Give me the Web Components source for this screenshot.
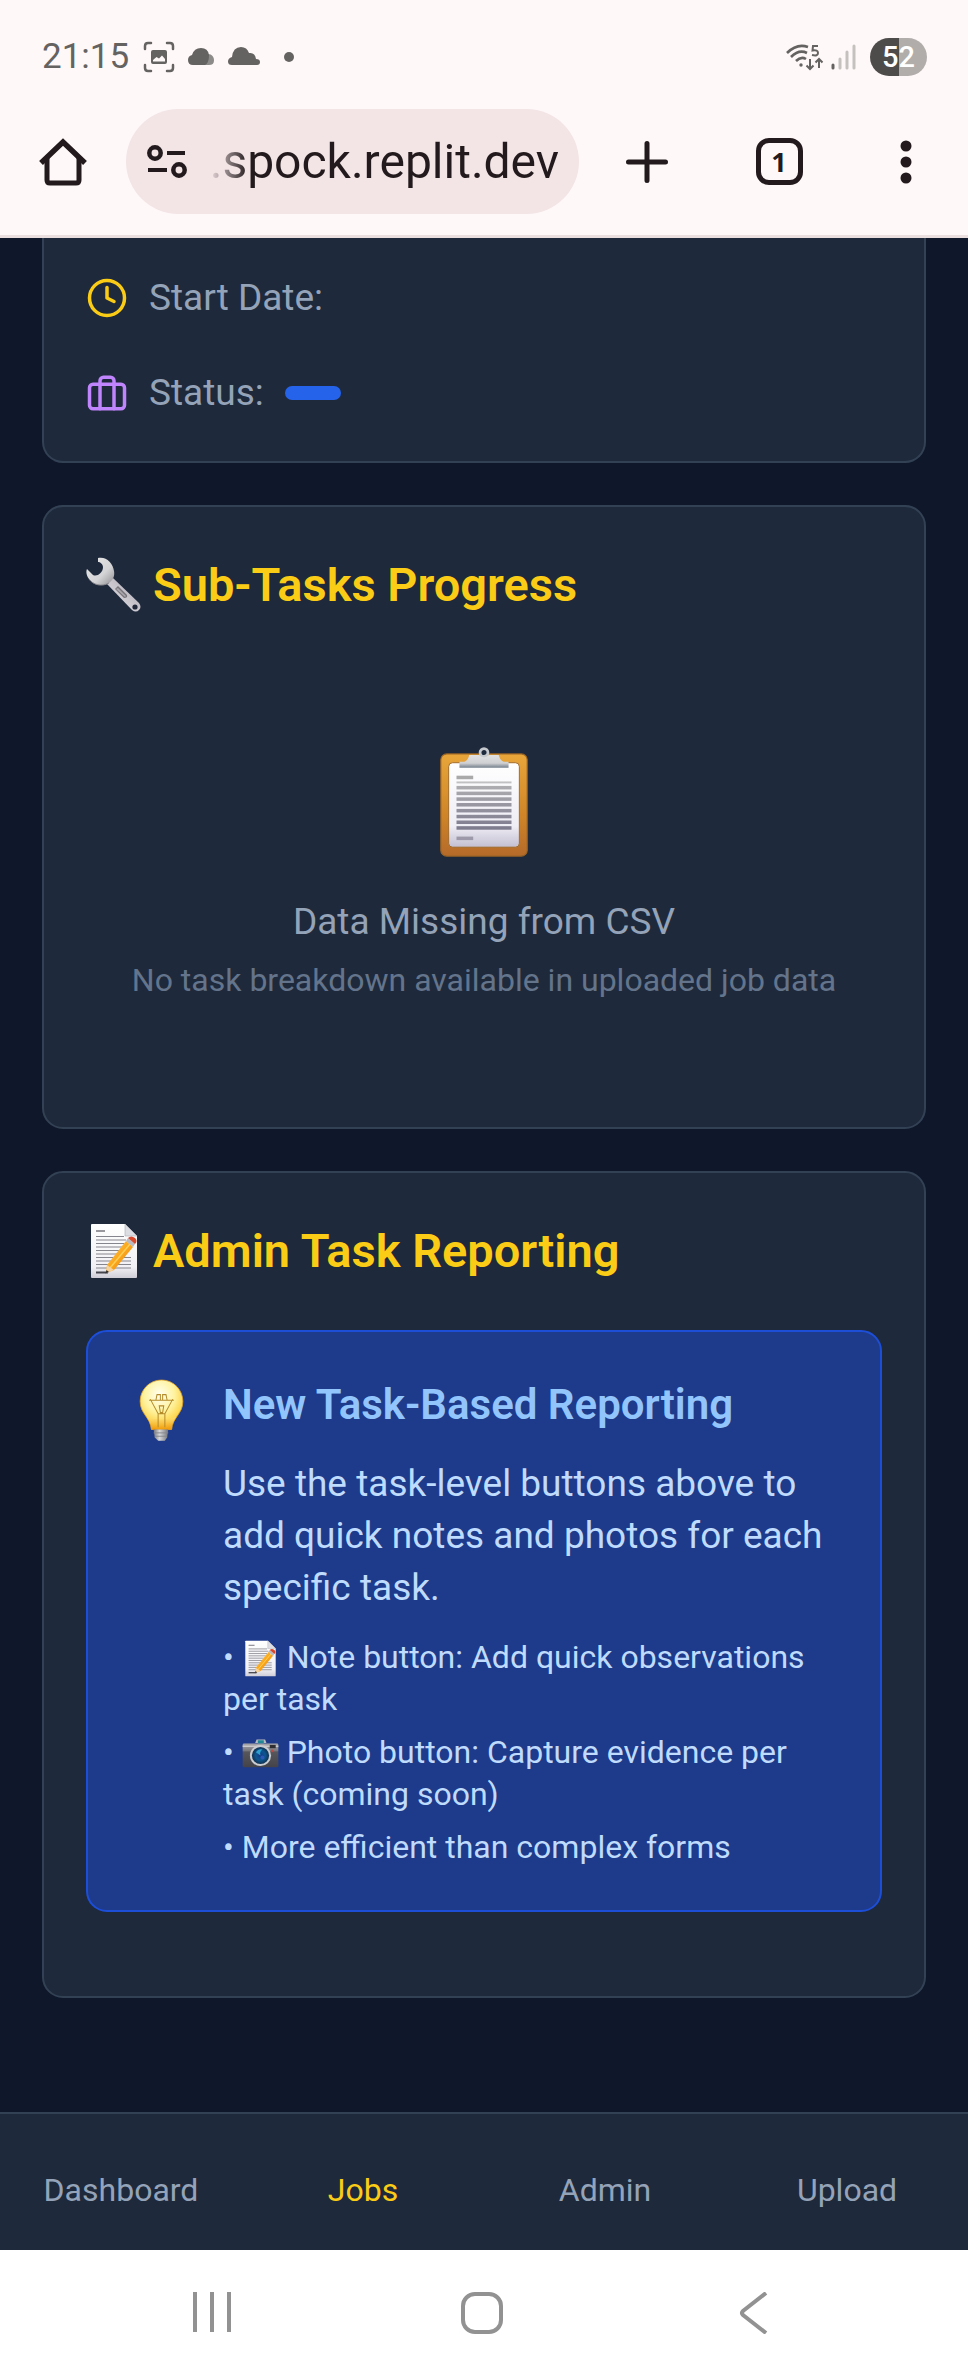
<!DOCTYPE html>
<html lang="en">
<head>
<meta charset="utf-8">
<meta name="viewport" content="width=device-width, initial-scale=1">
<title>Job details</title>
<style>
  body { margin: 0; background: #0f172a; font-family: Roboto, "Liberation Sans", sans-serif; }
</style>
</head>
<body>
<job-screen></job-screen>

<script>
const define = (name, html) => {
  const template = document.createElement('template');
  template.innerHTML = html;
  customElements.define(name, class extends HTMLElement {
    constructor() {
      super();
      this.attachShadow({ mode: 'open' }).append(template.content.cloneNode(true));
    }
  });
};

/* Pictures used in headings and in the text, all on a 56-unit square. */
const PICTURES = {
  wrench: `<defs>
      <linearGradient id="h" x1="0" y1="0" x2="1" y2="1"><stop offset="0" stop-color="#e9e9ea"/><stop offset=".6" stop-color="#d4d4d6"/><stop offset="1" stop-color="#8f8c91"/></linearGradient>
      <linearGradient id="s" x1="0" y1="1" x2="1" y2="0"><stop offset="0" stop-color="#77747b"/><stop offset=".4" stop-color="#cfccd3"/><stop offset="1" stop-color="#a7a2ad"/></linearGradient>
    </defs>
    <path d="M21 27 L27 21 L53 46 Q56 50 53 53 Q50 56 46 53 Z" fill="url(#s)"/>
    <path d="M29 32 L32 29 L41 38 Q42 41 38 41 Z" fill="#77737b"/>
    <path d="M30 32 L32 31 L40 39 L39 40 Z" fill="#aaa6ae"/>
    <circle cx="49" cy="50" r="2.6" fill="#20283a"/>
    <path d="M12 1 C20 -1 27 6 28 14 C29 19 27 23 23 26 C16 30 7 28 3 22 C0 18 0 14 1 12 L7 18 C11 20 17 16 17 10 C17 7 14 5 12 5 Z" fill="url(#h)"/>
    <path d="M23 26 C16 30 7 28 3 22" fill="none" stroke="#8a888e" stroke-width="1"/>`,
  memo: `<defs>
      <linearGradient id="p" x1="0" y1="0" x2="0" y2="1"><stop offset="0" stop-color="#ffffff"/><stop offset=".8" stop-color="#f1f0f5"/><stop offset="1" stop-color="#cfced8"/></linearGradient>
      <linearGradient id="g" x1="0" y1="0" x2="1" y2="1"><stop offset="0" stop-color="#ffce4a"/><stop offset=".5" stop-color="#fba61c"/><stop offset="1" stop-color="#d9780c"/></linearGradient>
    </defs>
    <path d="M6 1 H39 L51 13 V54 Q51 55 50 55 H6 Q5 55 5 54 V2 Q5 1 6 1 Z" fill="url(#p)"/>
    <path d="M39 1 L51 13 H39 Z" fill="#dcdde3" stroke="#a9abb3" stroke-width=".6"/>
    <path d="M10 8 H19" stroke="#77777e" stroke-width="1.5"/>
    <path d="M10 13.500 H38 M10 17 H40 M10 20.500 H38 M10 24 H36 M10 27.500 H33 M10 31 H31 M10 34.500 H45 M10 38 H45 M10 41.500 H45 M10 45 H45" stroke="#85858d" stroke-width="1.2"/>
    <path d="M10 49.500 H22" stroke="#45454d" stroke-width="2"/>
    <path d="M40 18 L47 24 L28 47 L20 50 L21 42 Z" fill="url(#g)"/>
    <path d="M44 21 L24 45" stroke="#ffcf55" stroke-width="1.500"/>
    <path d="M21 42 L28 47 L20 50 Z" fill="#f5d3a0"/><path d="M20.500 47 L23 49 L19.500 50.500 Z" fill="#333"/>
    <path d="M40 18 L42 15 L49 21 L47 24 Z" fill="#b9b9c0"/>
    <path d="M42 15 Q45 12 49 15 Q52 18 49 21 Z" fill="#d9492b"/>`,
  camera: `<defs>
      <linearGradient id="b" x1="0" y1="0" x2="0" y2="1"><stop offset="0" stop-color="#a9a9ad"/><stop offset=".3" stop-color="#77777c"/><stop offset=".35" stop-color="#56565b"/><stop offset="1" stop-color="#434349"/></linearGradient>
      <radialGradient id="l"><stop offset="0" stop-color="#143a86"/><stop offset=".55" stop-color="#0d5791"/><stop offset="1" stop-color="#123150"/></radialGradient>
    </defs>
    <g transform="translate(0 4)">
    <path d="M20 8 L22 3 H35 L37 8 Z" fill="#b8bcc0"/><rect x="24" y="4" width="9" height="5" fill="#1f8796"/>
    <rect x="1" y="9" width="54" height="36" rx="2" fill="url(#b)"/>
    <path d="M1 13 H55" stroke="#c9c9cc" stroke-width="2"/>
    <rect x="42" y="11" width="9" height="5" fill="#2e2e33"/><circle cx="46" cy="20" r="2" fill="#b74b4b"/>
    <circle cx="28" cy="27" r="16" fill="#c9ccd1"/><circle cx="28" cy="27" r="13" fill="url(#l)"/>
    <path d="M21 22 Q25 16 31 18 Q26 22 28 27 Z" fill="#2f9fce"/><circle cx="31" cy="30" r="3" fill="#2e58b8"/>
    </g>`,
  bulb: `<defs>
      <radialGradient id="y" cx=".45" cy=".3" r=".7"><stop offset="0" stop-color="#fffef0"/><stop offset=".5" stop-color="#fff3a0"/><stop offset=".85" stop-color="#fcd348"/><stop offset="1" stop-color="#e9a01c"/></radialGradient>
      <linearGradient id="n" x1="0" y1="0" x2="0" y2="1"><stop offset="0" stop-color="#fce27a"/><stop offset="1" stop-color="#f39a06"/></linearGradient>
      <linearGradient id="m"><stop offset="0" stop-color="#75777d"/><stop offset=".4" stop-color="#d5d7da"/><stop offset="1" stop-color="#74767c"/></linearGradient>
    </defs>
    <path d="M28 0 C39 0 47 9 47 19 C47 30 38 33 37 44 H19 C18 33 9 30 9 19 C9 9 17 0 28 0 Z" fill="url(#y)" stroke="#dda02a" stroke-width=".7"/>
    <path d="M15 33 Q28 37 41 33 Q37 38 37 44 H19 Q19 38 15 33 Z" fill="url(#n)" opacity=".8"/>
    <path d="M18 17 L25 30 M38 17 L31 30 M25 30 H31 M25 30 V42 M31 30 V42 M17 18 H39 M23 18 L24 13 H27 V18 M29 18 V13 H32 L33 18 M26 23 H30 L29 29 H27 Z" fill="none" stroke="#b58b2a" stroke-width=".9"/>
    <path d="M21 44 H34 L33 51 L31 54 H25 L22 51 Z" fill="url(#m)"/>
    <path d="M21 47 H34 M22 50 H33" stroke="#85868c" stroke-width=".8"/>`,
  clipboard: `<defs>
      <linearGradient id="w" x1="0" y1="0" x2="0" y2="1"><stop offset="0" stop-color="#e8a63a"/><stop offset=".6" stop-color="#cf8527"/><stop offset="1" stop-color="#b56a2a"/></linearGradient>
      <linearGradient id="q" x1="0" y1="0" x2="0" y2="1"><stop offset="0" stop-color="#ffffff"/><stop offset=".75" stop-color="#efedf5"/><stop offset="1" stop-color="#c3bfd2"/></linearGradient>
      <linearGradient id="c" x1="0" y1="0" x2="0" y2="1"><stop offset="0" stop-color="#e2e2e3"/><stop offset=".65" stop-color="#cfd0d2"/><stop offset="1" stop-color="#75808d"/></linearGradient>
      <linearGradient id="t" gradientUnits="userSpaceOnUse" x1="0" y1="15" x2="0" y2="44"><stop offset="0" stop-color="#dddddd"/><stop offset=".15" stop-color="#adadb0"/><stop offset="1" stop-color="#77748a"/></linearGradient>
    </defs>
    <rect x="6" y="3" width="44" height="52" rx="3" fill="url(#w)" stroke="#9a6424" stroke-width=".6"/>
    <rect x="10" y="7.500" width="36" height="43" rx="2" fill="url(#q)" stroke="#a06a28" stroke-width=".5"/>
    <path d="M14 15 H22.500" stroke="#a9a9a9" stroke-width="1.800"/>
    <g fill="url(#t)"><rect x="14" y="17" width="28" height="1"/><rect x="14" y="19.300" width="28" height="1.800"/><rect x="14" y="22.200" width="28" height="1.800"/><rect x="14" y="25.100" width="28" height="1.800"/><rect x="14" y="28" width="28" height="1.800"/><rect x="14" y="31" width="28" height="1.800"/><rect x="14" y="34" width="28" height="1.800"/><rect x="14" y="36.900" width="28" height="1.800"/><rect x="14" y="39.800" width="28" height="1.800"/></g>
    <path d="M14 46 H22.500" stroke="#9d98aa" stroke-width="1.800"/>
    <circle cx="28" cy="2.300" r="2" fill="#1e293b" stroke="#c5c8cc" stroke-width="1.400"/>
    <path d="M15.500 7 H18 Q20 6 20.500 3.500 H25.500 Q28 6 30.500 3.500 H35.500 Q36 6 38 7 H40.500 V10 H15.500 Z" fill="url(#c)"/>`
};

customElements.define('pictogram-icon', class extends HTMLElement {
  constructor() {
    super();
    this.attachShadow({ mode: 'open' });
  }
  connectedCallback() {
    this.shadowRoot.innerHTML = `
      <style>
        :host { display: inline-block; flex: none; width: var(--size, 56px); height: var(--size, 56px); }
        svg { display: block; width: 100%; height: 100%; overflow: visible; }
      </style>
      <svg viewBox="0 0 56 56" role="img" aria-label="${this.getAttribute('name')}">${PICTURES[this.getAttribute('name')]}</svg>`;
  }
});

define('phone-status', `
  <style>
    :host { display: flex; align-items: center; justify-content: space-between; height: 109px; box-sizing: border-box; padding: 4px 41px 0 42px; background: #fff8f8; color: #646361; }
    div { display: flex; align-items: center; }
    svg { display: block; }
    time { font: 400 35px/42px Roboto, sans-serif; margin-right: 14px; }
    .notes { gap: 13px; }
    .signals { gap: 7px; }
    .battery { justify-content: center; width: 57px; height: 38px; margin-left: 6px; border-radius: 19px; background: linear-gradient(90deg, #4d4c4b 51%, #b0adab 51%); color: #fff; font: 500 29px/38px Roboto, sans-serif; }
  </style>
  <div>
    <time>21:15</time>
    <div class="notes">
      <svg width="32" height="32" viewBox="0 0 32 32" fill="none" stroke="currentColor" stroke-width="2.500" stroke-linecap="round"><path d="M2 8 V5 Q2 2 5 2 H8 M24 2 H27 Q30 2 30 5 V8 M30 24 V27 Q30 30 27 30 H24 M8 30 H5 Q2 30 2 27 V24"/><path fill="currentColor" stroke="none" fill-rule="evenodd" d="M10 9 H22 Q24 9 24 11 V21 Q24 23 22 23 H10 Q8 23 8 21 V11 Q8 9 10 9 Z M10 20.500 H22 V18 L19 14.500 L16 17.500 L13.500 16 L10 19 Z"/></svg>
      <svg width="27" height="20" viewBox="0 0 27 20"><path d="M20 7 C24 7 26 10 26 13.500 Q26 18 21 18 H15 V8 Z" fill="#8d8b89"/><path d="M5 18 Q0 18 0 13 Q0 9 4 8 Q6 1 13 1 Q20 1 21 8 Q21 16 17 18 Z" fill="currentColor"/></svg>
      <svg width="32" height="20" viewBox="0 0 32 20"><path d="M4 18 Q0 18 0 14.500 Q0 11 4 10 Q5 0 13 0 Q19 0 21 6 Q27 5 28 12 Q32 12 32 15 Q32 18 29 18 Z" fill="currentColor"/></svg>
      <svg width="32" height="20" viewBox="0 0 32 20"><circle cx="16" cy="10" r="5" fill="currentColor"/></svg>
    </div>
  </div>
  <div class="signals">
    <svg width="38" height="30" viewBox="0 0 38 30" fill="none" stroke="currentColor" stroke-width="2.600"><path d="M1 11 Q11 1 22 5 M5 15 Q13 7 21 11 M10 19 Q15 14 20 17"/><circle cx="15" cy="23" r="1.700" fill="currentColor" stroke="none"/><path stroke-width="2" d="M24 17 V27 M20.500 23.500 L24 27 L27.500 23.500 M33 26 V17 M29.500 20.500 L33 17 L36.500 20.500"/><path stroke-width="2" d="M32 4 H27 L26.500 8.500 Q32 7.500 32 11 Q32 14.500 26 13"/></svg>
    <svg width="26" height="28" viewBox="0 0 26 28" fill="none" stroke="#c4c1bf" stroke-width="3" stroke-linecap="round"><path d="M2 22 V25" stroke="#646361"/><path d="M9 16 V25 M16 9 V25 M23 3 V25"/></svg>
    <div class="battery">52</div>
  </div>`);

define('browser-bar', `
  <style>
    :host { display: grid; grid-template-columns: 126px 1fr 136px 128px 125px; align-items: center; padding-bottom: 21px; border-bottom: 3px solid #ecdfdf; background: #fff8f8; color: #221a1c; }
    button { display: flex; align-items: center; justify-content: center; height: 105px; padding: 0; border: 0; background: none; color: inherit; }
    svg { display: block; }
    form { display: flex; align-items: center; gap: 21px; height: 105px; box-sizing: border-box; padding: 0 20px 0 21px; border-radius: 53px; background: #f3e4e6; }
    form button { flex: none; height: 42px; }
    input { flex: 1; min-width: 0; width: 0; height: 63px; padding: 0; border: 0; outline: 0; background: none; color: inherit; font: 400 48px/63px Roboto, sans-serif; text-align: right; mask-image: linear-gradient(90deg, transparent, #000 40px); }
    .tabs { width: 47px; height: 47px; box-sizing: border-box; border: 5px solid; border-radius: 13px; font: 700 27px/37px "Noto Sans", sans-serif; text-align: center; }
  </style>
  <button aria-label="Home"><svg width="48" height="48" viewBox="0 0 48 48" fill="none" stroke="currentColor" stroke-width="5"><path d="M2 25 L24 4 L46 25" stroke-width="5.500"/><path d="M8 20 V42 Q8 45 11 45 H37 Q40 45 40 42 V20"/></svg></button>
  <form>
    <button type="button" aria-label="Site information"><svg width="40" height="34" viewBox="0 0 40 34" fill="none" stroke="currentColor" stroke-width="4.500"><circle cx="8" cy="8" r="5.700"/><circle cx="32" cy="25" r="5.700"/><path stroke-width="4" d="M20 8 H38 M1 25 H20"/></svg></button>
    <input type="text" aria-label="Address" value=".spock.replit.dev">
  </form>
  <button aria-label="New tab"><svg width="42" height="42" viewBox="0 0 42 42" stroke="currentColor" stroke-width="5" stroke-linecap="round"><path d="M21 2.500 V39.500 M2.500 21 H39.500"/></svg></button>
  <button aria-label="Open tabs"><span class="tabs">1</span></button>
  <button aria-label="Menu"><svg width="12" height="44" viewBox="0 0 12 44" fill="currentColor"><circle cx="6" cy="6" r="5.500"/><circle cx="6" cy="22" r="5.500"/><circle cx="6" cy="38" r="5.500"/></svg></button>`);

define('job-card', `
  <style>
    :host { display: block; padding: 42px; border: 2px solid #334155; border-radius: 21px; background: #1e293b; }
    :host([continued]) { padding-top: 33px; border-top: 0; border-top-left-radius: 0; border-top-right-radius: 0; }
    h2 { display: flex; align-items: center; gap: 11px; margin: 0 0 43px; color: #facc15; font: 600 47px/72px Roboto, sans-serif; }
    :host([continued]) h2 { display: none; }
  </style>
  <h2><slot name="icon"></slot><slot name="title"></slot></h2>
  <slot></slot>`);

define('detail-row', `
  <style>
    :host { display: flex; align-items: center; gap: 21px; color: #94a3b8; font-size: 37px; line-height: 53px; }
    :host(:not(:last-child)) { margin-bottom: 42px; }
  </style>
  <slot name="icon"></slot><span><slot></slot></span><slot name="value"></slot>`);

define('status-badge', `
  <style>:host { display: block; width: 56px; height: 14px; border-radius: 7px; background: #2563eb; }</style>`);

define('empty-state', `
  <style>
    :host { display: flex; flex-direction: column; align-items: center; padding: 84px 0; text-align: center; }
    p { margin: 0; }
    .main { margin: 42px 0 11px; color: #94a3b8; font-size: 37px; line-height: 53px; }
    .hint { color: #64748b; font-size: 32px; line-height: 42px; }
    ::slotted(pictogram-icon) { --size: 110px; margin-bottom: -5px; }
  </style>
  <slot name="icon"></slot>
  <p class="main"><slot name="main"></slot></p>
  <p class="hint"><slot name="hint"></slot></p>`);

define('tip-panel', `
  <style>
    :host { display: flex; gap: 30px; margin-bottom: 42px; padding: 42px; border: 2px solid #1d4ed8; border-radius: 21px; background: #1e3a8a; color: #bfdbfe; }
    pictogram-icon { --size: 63px; margin-top: 6px; }
    .body { flex: 1; min-width: 0; display: flex; flex-direction: column; gap: 22px; }
    h3 { margin: 0; color: #93c5fd; font-size: 42px; line-height: 62px; font-weight: 600; }
    p { margin: 0; font-size: 37px; line-height: 52px; }
    ul { display: flex; flex-direction: column; gap: 11px; margin: 0; padding: 0; list-style: none; font-size: 32px; line-height: 42px; }
    li::before { content: "• "; }
    li pictogram-icon { --size: 37px; margin: 0; vertical-align: -9px; }
  </style>
  <pictogram-icon name="bulb"></pictogram-icon>
  <div class="body">
    <h3>New Task-Based Reporting</h3>
    <p>Use the task-level buttons above to add quick notes and photos for each specific task.</p>
    <ul>
      <li><pictogram-icon name="memo"></pictogram-icon> Note button: Add quick observations per task</li>
      <li><pictogram-icon name="camera"></pictogram-icon> Photo button: Capture evidence per task (coming soon)</li>
      <li>More efficient than complex forms</li>
    </ul>
  </div>`);

define('bottom-nav', `
  <style>
    :host { display: block; border-top: 2px solid #334155; background: #1e293b; }
    nav { display: grid; grid-template-columns: repeat(4, 1fr); }
    a { padding: 55px 0 39px; color: #94a3b8; font-size: 32px; line-height: 42px; text-align: center; text-decoration: none; }
    a[aria-current] { color: #facc15; }
  </style>
  <nav aria-label="Main">
    <a href="#dashboard">Dashboard</a>
    <a href="#jobs" aria-current="page">Jobs</a>
    <a href="#admin">Admin</a>
    <a href="#upload">Upload</a>
  </nav>`);

define('system-nav', `
  <style>
    :host { display: grid; grid-template-columns: repeat(3, 1fr); padding: 0 80px 0 76px; background: #fff; color: #929292; }
    button { display: flex; align-items: center; justify-content: center; height: 126px; padding: 0; border: 0; background: none; color: inherit; }
    svg { display: block; fill: none; stroke: currentColor; stroke-width: 4; }
  </style>
  <button aria-label="Recent apps"><svg width="42" height="42" viewBox="0 0 42 42"><path d="M5 0 V40 M22 0 V40 M39 0 V40"/></svg></button>
  <button aria-label="Home screen"><svg width="42" height="42" viewBox="0 0 42 42"><rect x="2" y="2" width="38" height="38" rx="12"/></svg></button>
  <button aria-label="Back"><svg width="42" height="42" viewBox="0 0 42 42"><path d="M34 1 L11 19 Q9 21 11 23 L34 41"/></svg></button>`);

define('job-screen', `
  <style>
    :host { display: flex; flex-direction: column; min-height: 100vh; }
    main { flex: 1; display: flex; flex-direction: column; gap: 42px; padding: 0 42px 113px; }
    .line { width: 42px; height: 42px; flex: none; fill: none; stroke: currentColor; stroke-width: 2; stroke-linecap: round; stroke-linejoin: round; }
    .clock { color: #facc15; }
    .case { color: #c084fc; }
  </style>
  <phone-status></phone-status>
  <browser-bar></browser-bar>
  <main>
    <job-card continued>
      <detail-row>
        <svg slot="icon" class="line clock" viewBox="0 0 24 24"><circle cx="12" cy="12" r="10"/><path d="M12 6 V12 L16 14"/></svg>
        Start Date:
      </detail-row>
      <detail-row>
        <svg slot="icon" class="line case" viewBox="0 0 24 24"><rect x="2" y="7" width="20" height="14" rx="2"/><path d="M8 21 V5 A2 2 0 0 1 10 3 H14 A2 2 0 0 1 16 5 V21"/></svg>
        Status:
        <status-badge slot="value"></status-badge>
      </detail-row>
    </job-card>
    <job-card>
      <pictogram-icon slot="icon" name="wrench"></pictogram-icon>
      <span slot="title">Sub-Tasks Progress</span>
      <empty-state>
        <pictogram-icon slot="icon" name="clipboard"></pictogram-icon>
        <span slot="main">Data Missing from CSV</span>
        <span slot="hint">No task breakdown available in uploaded job data</span>
      </empty-state>
    </job-card>
    <job-card>
      <pictogram-icon slot="icon" name="memo"></pictogram-icon>
      <span slot="title">Admin Task Reporting</span>
      <tip-panel></tip-panel>
    </job-card>
  </main>
  <bottom-nav></bottom-nav>
  <system-nav></system-nav>`);
</script>
</body>
</html>
